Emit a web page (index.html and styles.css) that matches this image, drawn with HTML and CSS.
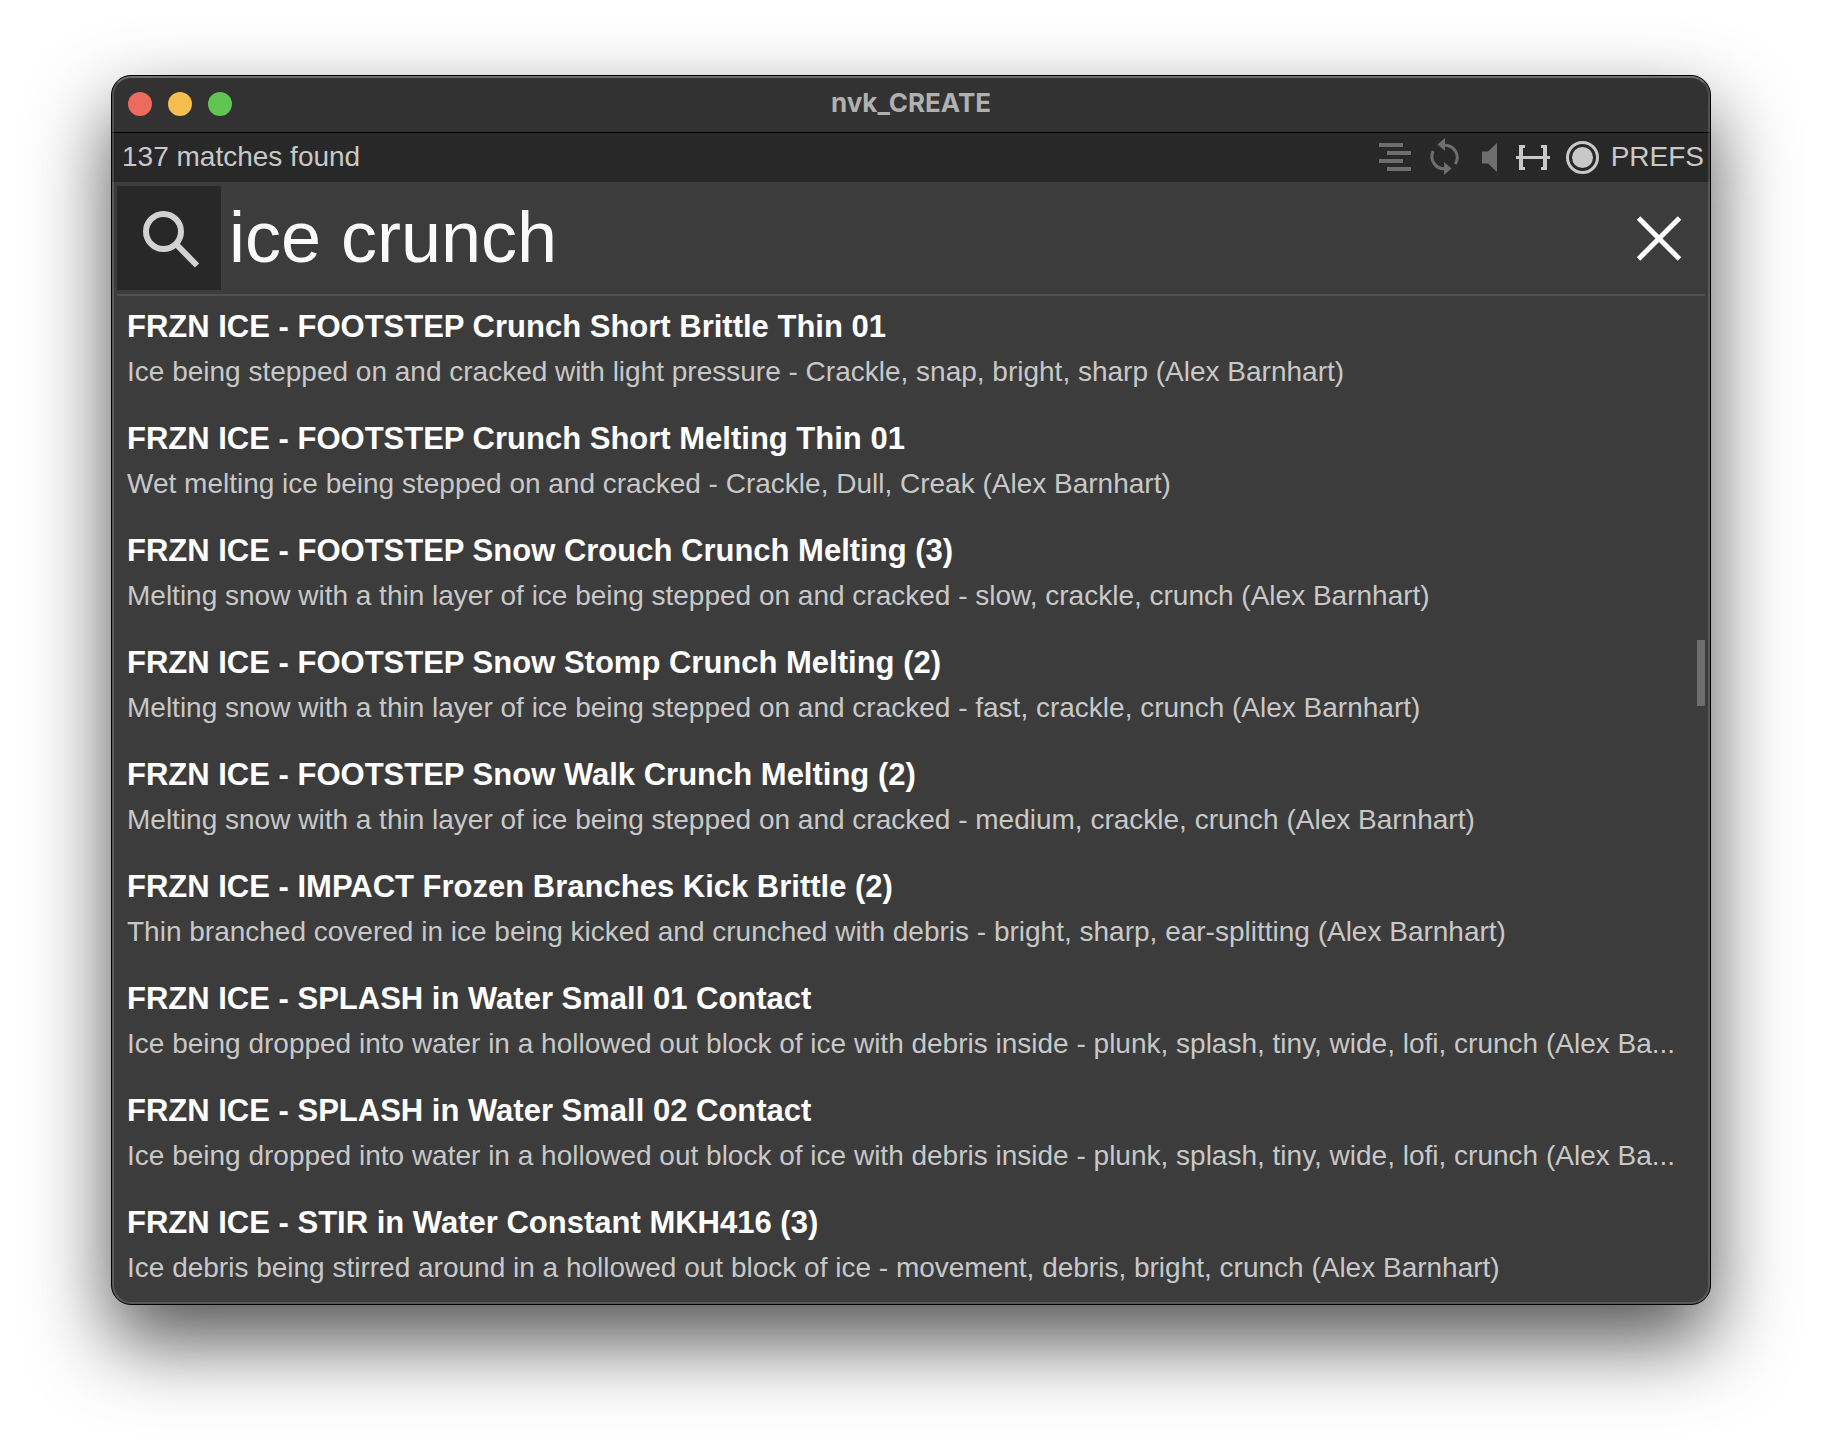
FILE: index.html
```
<!DOCTYPE html>
<html lang="en">

<head>
  <meta charset="UTF-8" />
  <meta name="viewport" content="width=device-width, initial-scale=1.0" />
  <title>nvk_CREATE</title>
  <link rel="stylesheet" href="styles.css">
</head>

<body>
  <div class="window">
    <header class="titlebar">
      <div class="traffic-lights">
        <button class="light close" aria-label="Close"></button>
        <button class="light minimize" aria-label="Minimize"></button>
        <button class="light zoom" aria-label="Zoom"></button>
      </div>
      <h1>nvk_CREATE</h1>
    </header>

    <div class="toolbar">
      <span class="matches">137 matches found</span>
      <div class="tools">
        <button aria-label="Stagger items">
          <svg width="32" height="39" viewBox="0 0 32 39" fill="currentColor">
            <path d="M0 5h24v4H0zM8 13h24v4H8zM0 21h24v4H0zM8 29h24v4H8z" />
          </svg>
        </button>
        <button aria-label="Loop">
          <svg width="35" height="39" viewBox="0 0 35 39" fill="currentColor">
            <path d="M10.5 6.5L18 0v13z" />
            <path d="M24.500 30.500L17 37V24z" />
            <path d="M18 7.200A12.300 12.300 0 0 1 28.300 26" fill="none" stroke="currentColor" stroke-width="3" />
            <path d="M17 30.800A12.300 12.300 0 0 1 6.200 13" fill="none" stroke="currentColor" stroke-width="3" />
          </svg>
        </button>
        <button aria-label="Preview">
          <svg width="22" height="39" viewBox="0 0 22 39" fill="currentColor">
            <path d="M4 13.500h6L19 5v29l-9-8.500H4z" />
          </svg>
        </button>
        <button class="on" aria-label="Fit to selection">
          <svg width="34" height="39" viewBox="0 0 34 39" fill="currentColor">
            <path d="M0 18h34v3H0z" />
            <path d="M3 7h6v3H7v19h2v3H3zM31 7h-6v3h2v19h-2v3h6z" />
          </svg>
        </button>
        <button class="on" aria-label="Record">
          <svg width="33" height="39" viewBox="0 0 33 39" fill="currentColor">
            <circle cx="16.500" cy="19.500" r="15" fill="none" stroke="currentColor" stroke-width="3" />
            <circle cx="16.500" cy="19.500" r="10.500" />
          </svg>
        </button>
      </div>
      <button class="prefs">PREFS</button>
    </div>

    <form class="search">
      <button type="button" class="search-button" aria-label="Search">
        <svg width="104" height="104" viewBox="0 0 104 104" fill="none" stroke="currentColor" stroke-width="6">
          <circle cx="46.500" cy="45.500" r="17.500" />
          <path d="M58.500 57.500l21.500 22" />
        </svg>
      </button>
      <input type="text" value="ice crunch" aria-label="Search sounds" />
      <button type="button" class="clear" aria-label="Clear search">
        <svg width="46" height="46" viewBox="0 0 46 46" stroke="currentColor" stroke-width="5">
          <path d="M2.500 3l41 41M43.500 3l-41 41" />
        </svg>
      </button>
    </form>

    <main class="results">
      <ul>
        <li>
          <h2>FRZN ICE - FOOTSTEP Crunch Short Brittle Thin 01</h2>
          <p>Ice being stepped on and cracked with light pressure - Crackle, snap, bright, sharp (Alex Barnhart)</p>
        </li>
        <li>
          <h2>FRZN ICE - FOOTSTEP Crunch Short Melting Thin 01</h2>
          <p>Wet melting ice being stepped on and cracked - Crackle, Dull, Creak (Alex Barnhart)</p>
        </li>
        <li>
          <h2>FRZN ICE - FOOTSTEP Snow Crouch Crunch Melting (3)</h2>
          <p>Melting snow with a thin layer of ice being stepped on and cracked - slow, crackle, crunch (Alex Barnhart)</p>
        </li>
        <li>
          <h2>FRZN ICE - FOOTSTEP Snow Stomp Crunch Melting (2)</h2>
          <p>Melting snow with a thin layer of ice being stepped on and cracked - fast, crackle, crunch (Alex Barnhart)</p>
        </li>
        <li>
          <h2>FRZN ICE - FOOTSTEP Snow Walk Crunch Melting (2)</h2>
          <p>Melting snow with a thin layer of ice being stepped on and cracked - medium, crackle, crunch (Alex Barnhart)</p>
        </li>
        <li>
          <h2>FRZN ICE - IMPACT Frozen Branches Kick Brittle (2)</h2>
          <p>Thin branched covered in ice being kicked and crunched with debris - bright, sharp, ear-splitting (Alex Barnhart)</p>
        </li>
        <li>
          <h2>FRZN ICE - SPLASH in Water Small 01 Contact</h2>
          <p>Ice being dropped into water in a hollowed out block of ice with debris inside - plunk, splash, tiny, wide, lofi, crunch (Alex Ba...</p>
        </li>
        <li>
          <h2>FRZN ICE - SPLASH in Water Small 02 Contact</h2>
          <p>Ice being dropped into water in a hollowed out block of ice with debris inside - plunk, splash, tiny, wide, lofi, crunch (Alex Ba...</p>
        </li>
        <li>
          <h2>FRZN ICE - STIR in Water Constant MKH416 (3)</h2>
          <p>Ice debris being stirred around in a hollowed out block of ice - movement, debris, bright, crunch (Alex Barnhart)</p>
        </li>
      </ul>
      <div class="scroll-thumb"></div>
    </main>
  </div>
</body>

</html>
```

FILE: styles.css
```
* {
  box-sizing: border-box;
}

body {
  margin: 0;
  padding: 75px 111px 147px;
  background-color: #fff;
  font-family: 'Liberation Sans', Arial, sans-serif;
}

button {
  padding: 0;
  border: 0;
  background: none;
  color: inherit;
  font: inherit;
}

svg {
  display: block;
}

.window {
  position: relative;
  overflow: hidden;
  border: 1px solid #000;
  border-radius: 20px;
  background-color: #3c3c3c;
  color: #c8c8c8;
  font-size: 28px;
  box-shadow: 0 36px 80px rgba(0, 0, 0, 0.68);
}

/* light rim that macOS draws just inside the window edge */
.window::after {
  content: '';
  position: absolute;
  inset: 0;
  border: 2px solid rgba(255, 255, 255, 0.15);
  border-top-color: rgba(255, 255, 255, 0.3);
  border-radius: 19px;
  pointer-events: none;
}

.titlebar {
  display: grid;
  grid-template-columns: 1fr auto 1fr;
  align-items: center;
  height: 57px;
  padding: 0 16px;
  border-bottom: 1px solid #000;
  background-color: #323232;
}

.titlebar h1 {
  margin: 0;
  padding-bottom: 2px;
  color: #b0b0b0;
  font: bold 26px/32px Inter, sans-serif;
}

.traffic-lights {
  display: flex;
  gap: 16px;
}

.light {
  width: 24px;
  height: 24px;
  border-radius: 50%;
}

.close {
  background-color: #ed6a5e;
}

.minimize {
  background-color: #f5bf4f;
}

.zoom {
  background-color: #61c554;
}

.toolbar {
  display: flex;
  align-items: center;
  gap: 12px;
  height: 49px;
  padding: 0 6px 0 10px;
  background-color: #282828;
}

.matches {
  flex: 1;
  padding-bottom: 2px;
}

.prefs {
  padding-bottom: 2px;
}

.tools {
  display: flex;
  gap: 16px;
  color: #6e6e6e;
}

.tools .on {
  color: #c8c8c8;
}

.search {
  display: flex;
  align-items: center;
  margin: 0 5px;
  padding: 4px 0;
  border-bottom: 2px solid #505050;
}

.search-button {
  background-color: #282828;
  color: #d2d2d2;
}

.search input {
  flex: 1;
  min-width: 0;
  height: 104px;
  padding: 0 8px 2px;
  border: 0;
  outline: 0;
  background: none;
  color: #fafafa;
  font: 72px/80px 'Liberation Sans', Arial, sans-serif;
}

.clear {
  margin-right: 23px;
  color: #fff;
}

.results {
  position: relative;
}

.results ul {
  margin: 0;
  padding: 0;
  list-style: none;
}

.results li {
  padding: 13px 5px 20px 15px;
}

.results h2 {
  margin: 0 0 11px;
  color: #fff;
  font-size: 31px;
  line-height: 36px;
}

.results p {
  margin: 0;
  overflow: hidden;
  line-height: 32px;
  white-space: nowrap;
  text-overflow: ellipsis;
}

.scroll-thumb {
  position: absolute;
  top: 344px;
  right: 5px;
  width: 8px;
  height: 66px;
  background-color: #6e6e6e;
}
```
